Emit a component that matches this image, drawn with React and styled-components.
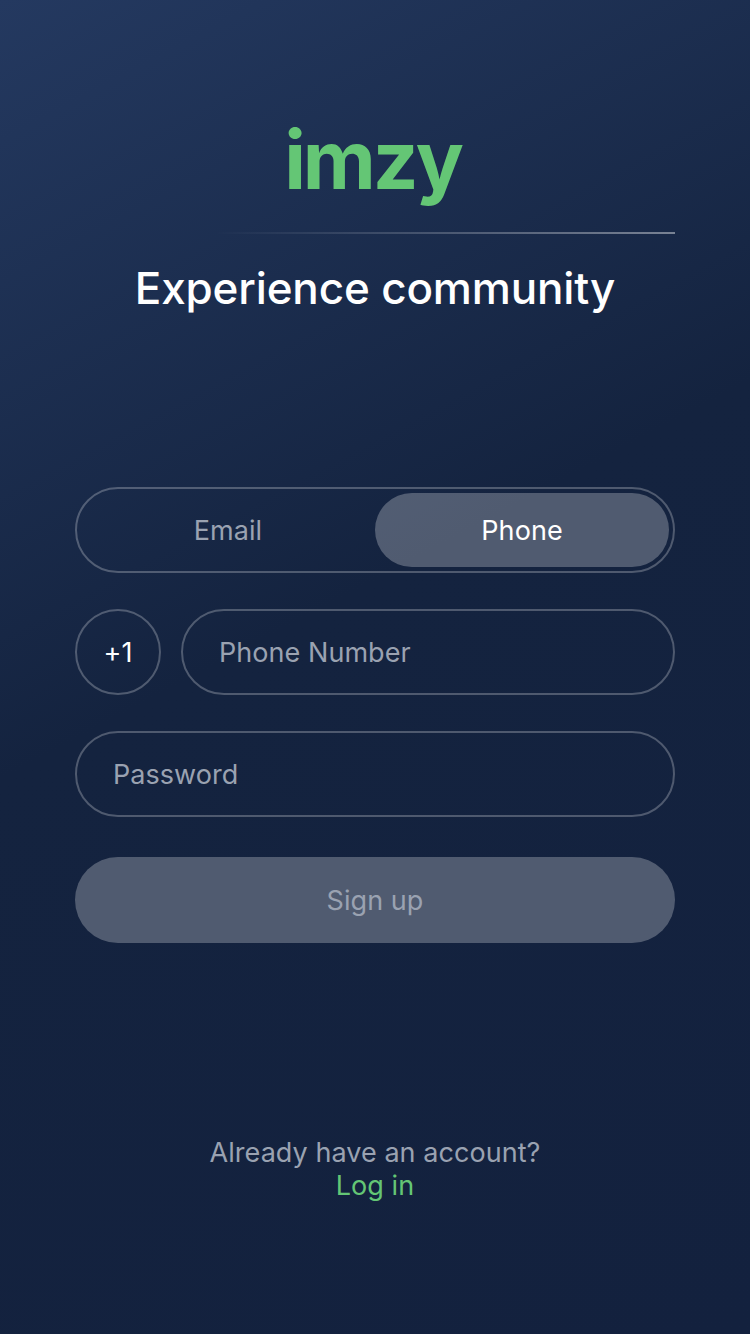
import React from "react"
import styled, { createGlobalStyle } from "styled-components"

const Global = createGlobalStyle`
  html, body {
    margin: 0;
    padding: 0;
  }
  body {
    font-family: Inter, "Liberation Sans", sans-serif;
  }
  * {
    box-sizing: border-box;
  }
`

const App = () => (
  <Page>
    <Global />

    <Header>
      <Logo>imzy</Logo>
      <Divider />
      <Title>Experience community</Title>
    </Header>

    <Form>
      <Toggle>
        <ToggleOption>Email</ToggleOption>
        <ToggleOption $active>Phone</ToggleOption>
      </Toggle>

      <PhoneRow>
        <CountryCode>+1</CountryCode>
        <Field>Phone Number</Field>
      </PhoneRow>

      <Field>Password</Field>

      <SubmitButton>Sign up</SubmitButton>
    </Form>

    <Footer>
      <div>Already have an account?</div>
      <LogIn>Log in</LogIn>
    </Footer>
  </Page>
)

const Page = styled.div`
  width: 750px;
  height: 1334px;
  padding: 0 75px;
  overflow: hidden;
  font-size: 27px;
  letter-spacing: 0.05px;
  background: linear-gradient(152deg, #243960 0%, #14233f 45%, #13213e 100%);
`

const Header = styled.div`
  display: flex;
  flex-direction: column;
  align-items: center;
  padding-top: 112px;
`

const Logo = styled.div`
  height: 106px;
  margin-right: 5px;
  font-size: 80px;
  line-height: 96px;
  font-weight: 700;
  letter-spacing: -3px;
  color: #64c675;
`

const Divider = styled.div`
  align-self: flex-end;
  width: 460px;
  height: 2px;
  margin-top: 14px;
  background: linear-gradient(90deg, rgba(255, 255, 255, 0), rgba(255, 255, 255, 0.42));
`

const Title = styled.h1`
  margin: 26px 0 0;
  font-size: 44px;
  line-height: 56px;
  font-weight: 500;
  letter-spacing: -0.15px;
  color: #ffffff;
`

const Form = styled.div`
  display: flex;
  flex-direction: column;
  gap: 36px;
  margin-top: 171px;
`

const Toggle = styled.div`
  display: flex;
  height: 86px;
  padding: 4px;
  border: 2px solid rgba(255, 255, 255, 0.25);
  border-radius: 43px;
`

const ToggleOption = styled.div`
  flex: 1;
  display: flex;
  align-items: center;
  justify-content: center;
  padding-top: 1px;
  border-radius: 37px;
  color: ${(p) => (p.$active ? "#ffffff" : "#9aa2b1")};
  background: ${(p) => (p.$active ? "rgba(255, 255, 255, 0.26)" : "transparent")};
`

const PhoneRow = styled.div`
  display: flex;
  gap: 20px;
`

const CountryCode = styled.div`
  flex: 0 0 86px;
  height: 86px;
  display: flex;
  align-items: center;
  justify-content: center;
  padding-top: 1px;
  border: 2px solid rgba(255, 255, 255, 0.25);
  border-radius: 50%;
  color: #ffffff;
`

const Field = styled.div`
  flex: 1 1 auto;
  height: 86px;
  display: flex;
  align-items: center;
  padding: 1px 36px 0;
  border: 2px solid rgba(255, 255, 255, 0.25);
  border-radius: 43px;
  color: #9aa2b1;
`

const SubmitButton = styled.div`
  height: 86px;
  margin-top: 4px;
  display: flex;
  align-items: center;
  justify-content: center;
  padding-top: 1px;
  border-radius: 43px;
  color: #9aa2b1;
  background: rgba(255, 255, 255, 0.26);
`

const Footer = styled.div`
  margin-top: 193px;
  text-align: center;
  line-height: 33px;
  color: #9aa2b1;
`

const LogIn = styled.div`
  color: #64c675;
`

export default App
